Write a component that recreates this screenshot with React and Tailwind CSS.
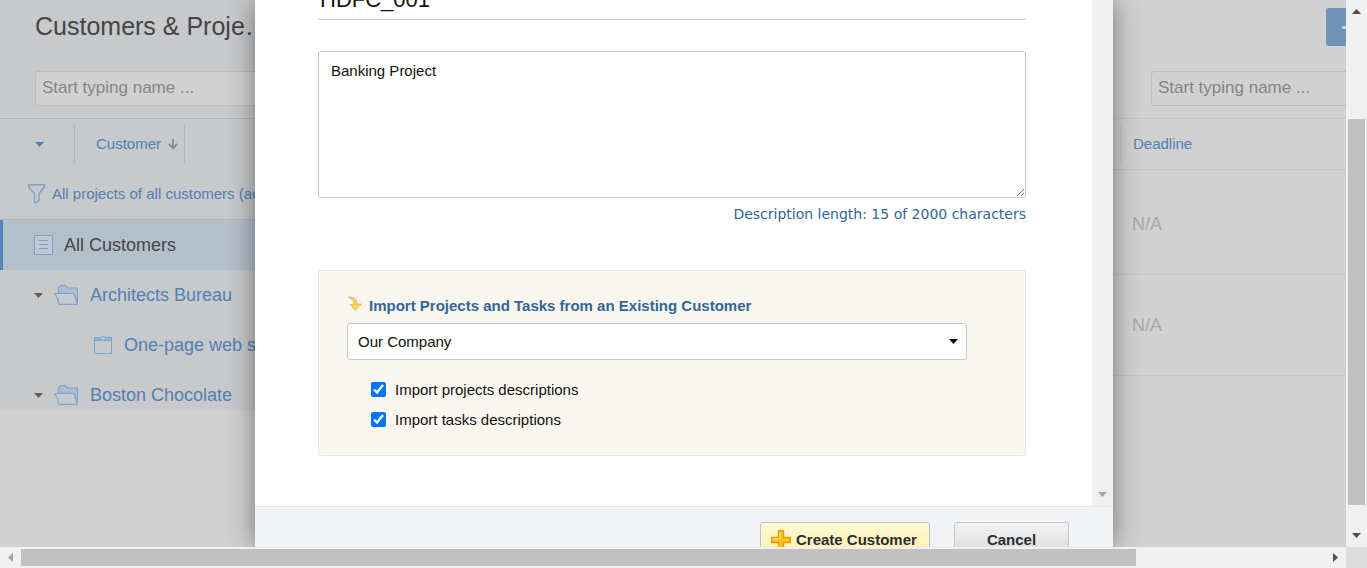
import React from "react";

function Caret({ dir = "down", className = "" }) {
  const paths = {
    down: "M0 0H9L4.5 5Z",
    up: "M0 5H9L4.5 0Z",
    left: "M5 0V9L0 4.5Z",
    right: "M0 0V9L5 4.5Z",
  };
  const vertical = dir === "down" || dir === "up";
  return (
    <svg
      width={vertical ? 9 : 5}
      height={vertical ? 5 : 9}
      className={`shrink-0 fill-current ${className}`}
      aria-hidden="true"
    >
      <path d={paths[dir]} />
    </svg>
  );
}

function FunnelIcon() {
  return (
    <svg width="18" height="20" viewBox="0 0 18 20" fill="none" stroke="#7ba0c3" strokeWidth="1.4" className="shrink-0" aria-hidden="true">
      <path d="M0.700 0.700H16.500V3L11 9.500V16.500L7.500 19L6.500 18V9.500L0.700 3Z" />
    </svg>
  );
}

function ListIcon() {
  return (
    <svg width="19" height="20" viewBox="0 0 19 20" fill="none" stroke="#809fcb" className="shrink-0" aria-hidden="true">
      <rect x="0.5" y="0.5" width="18" height="19" rx="0.5" fill="#bfc8d5" />
      <path d="M5 5.500H14M5 9.500H14M5 13.500H14" />
    </svg>
  );
}

function FolderIcon() {
  return (
    <svg width="25" height="20" viewBox="0 0 25 20" stroke="#84a1cc" strokeWidth="1.2" strokeLinejoin="round" className="shrink-0" aria-hidden="true">
      <path d="M4.500 8V3L6.500 0.700H11.500L13.500 3H23.400V19L19 8.500Z" fill="#adbdd7" />
      <path d="M0.700 8.500H18.500Q20 8.500 20.500 10L23.400 19.300H5Q4.500 14 0.700 8.500Z" fill="#c7cad0" />
    </svg>
  );
}

function ProjectIcon() {
  return (
    <svg width="18" height="19" viewBox="0 0 18 19" fill="none" stroke="#79a5c8" className="shrink-0" aria-hidden="true">
      <path d="M0.500 1.500H17.500V17.500H0.500ZM0.500 4.500H17.500" />
      <path d="M1 3H17" strokeWidth="2" stroke="#94b4cf" />
      <path d="M6.500 4V1.500L7.500 0.500H10.500L11.500 1.500V4Z" fill="#b5c6d5" />
    </svg>
  );
}

function SortIcon() {
  return (
    <svg width="10" height="11" viewBox="0 0 10 11" fill="none" stroke="#8c9095" strokeWidth="2" className="shrink-0" aria-hidden="true">
      <path d="M5 0V9M0.800 5L5 9.300L9.200 5" />
    </svg>
  );
}

function ImportIcon() {
  return (
    <svg width="16" height="16" viewBox="0 0 16 16" className="-mt-1 shrink-0" aria-hidden="true">
      <path d="M1 1.200Q9.500 0 10.500 8H14.500L8.500 14.500L3 8.500H6.700Q7 3.500 1 1.200Z" fill="#f6cc68" stroke="#eab36c" strokeWidth="0.8" strokeLinejoin="round" />
      <path d="M5 9.200H13L8.500 13.500Z" fill="#fbdc5b" />
    </svg>
  );
}

function PlusIcon() {
  return (
    <svg width="20" height="20" viewBox="0 0 20 20" className="shrink-0" aria-hidden="true">
      <path d="M7.500 0.700H12.500V7.500H19.300V12.500H12.500V19.300H7.500V12.500H0.700V7.500H7.500Z" fill="#fbc521" stroke="#e79a0c" strokeWidth="1.4" />
      <path d="M9 2V9H2" fill="none" stroke="#fde06a" />
    </svg>
  );
}

function SearchBox({ label, className }) {
  return (
    <input
      type="text"
      aria-label={label}
      placeholder="Start typing name ..."
      className={`h-[35px] rounded-l-[3px] border border-r-0 border-[#bcbcbc] bg-[#d1d1d1] px-[6px] pb-px text-[17px] placeholder:text-[#858585] ${className}`}
    />
  );
}

function Sidebar() {
  return (
    <aside className="w-[340px] shrink-0 self-start bg-[#c8c9cb]">
      <div className="h-[118px] overflow-hidden pl-[35px]">
        <h1 className="mt-[11px] text-[25px] leading-[30px] whitespace-nowrap text-[#444547]">Customers &amp; Proje…</h1>
        <SearchBox label="Search customers" className="mt-[30px] w-full" />
      </div>
      <div className="flex h-[51px] items-center border-t border-[#b4b5b7] text-[15px] text-[#5080b5]">
        <button type="button" aria-label="Choose rows" className="flex h-[38px] w-[75px] items-center border-r border-[#b4b5b7] pl-[35px]">
          <Caret />
        </button>
        <button type="button" className="flex h-[38px] w-[110px] items-center justify-end gap-[7px] border-r border-[#b4b5b7] pr-[6px]">
          Customer
          <SortIcon />
        </button>
      </div>
      <a href="#filter" className="flex h-[50px] items-center gap-[6px] pl-7 text-[15px] whitespace-nowrap text-[#5080b5]">
        <FunnelIcon />
        All projects of all customers (active)
      </a>
      <ul className="h-[192px] overflow-hidden border-t border-[#b4b5b7] text-[18px] whitespace-nowrap text-[#5080b5]">
        <li>
          <a href="#all" className="flex h-[50px] items-center gap-[11px] border-l-[3px] border-[#5384bd] bg-[#b4bfcc] pl-[31px] text-[#444547]">
            <ListIcon />
            All Customers
          </a>
        </li>
        <li>
          <a href="#architects" className="flex h-[50px] items-center pl-[34px]">
            <Caret className="text-[#606060]" />
            <span className="pr-[11px] pl-[11px]"><FolderIcon /></span>
            Architects Bureau
          </a>
        </li>
        <li>
          <a href="#site" className="flex h-[50px] items-center gap-[12px] pl-[94px]">
            <ProjectIcon />
            One-page web site
          </a>
        </li>
        <li>
          <a href="#boston" className="flex h-[50px] items-center pl-[34px]">
            <Caret className="text-[#606060]" />
            <span className="pr-[11px] pl-[11px]"><FolderIcon /></span>
            Boston Chocolate
          </a>
        </li>
      </ul>
    </aside>
  );
}

function TaskArea() {
  return (
    <section className="flex min-w-0 flex-1 flex-col">
      <div className="flex h-[118px] flex-col items-end pt-2">
        <button type="button" aria-label="Add task" className="h-[38px] w-5 overflow-hidden rounded-l-[3px] bg-[#7093b8] pl-4">
          <svg width="14" height="14" viewBox="0 0 14 14" className="mt-px max-w-none" aria-hidden="true">
            <path d="M0 6.500H14M7 0V13" stroke="#d5dbe2" strokeWidth="2.500" />
          </svg>
        </button>
        <SearchBox label="Search tasks" className="mt-[25px] w-[195px]" />
      </div>
      <table className="w-full table-fixed border-t border-[#c6c6c6] text-left">
        <thead>
          <tr className="h-[51px] border-b border-[#c6c6c6]">
            <th aria-label="Task" />
            <th className="w-[226px] p-0 text-[15px] font-normal text-[#5080b5]">
              <div className="flex h-[38px] items-center border-l border-[#c6c6c6] pl-3">Deadline</div>
            </th>
          </tr>
        </thead>
        <tbody className="text-[18px] text-[#a7a8ab]">
          <tr className="h-[4px] border-b border-[#cdcdcd]"><td colSpan={2} /></tr>
          <tr className="h-[101px] border-b border-[#c6c6c6]"><td /><td className="p-0 pl-3">N/A</td></tr>
          <tr className="h-[101px] border-b border-[#c6c6c6]"><td /><td className="p-0 pl-3">N/A</td></tr>
        </tbody>
      </table>
    </section>
  );
}

function CheckRow({ id, children }) {
  return (
    <div className="flex h-[30px] items-center gap-[9px]">
      <input id={id} type="checkbox" defaultChecked className="mb-px size-[15px] accent-[#0075ff]" />
      <label htmlFor={id}>{children}</label>
    </div>
  );
}

function CustomerDialog() {
  return (
    <div
      role="dialog"
      aria-label="Create customer"
      className="flex h-full min-w-0 flex-1 flex-col bg-white text-[15px] text-[#111111] shadow-[0_0_25px_rgba(0,0,0,0.45)]"
    >
      <div className="flex min-h-0 flex-1">
        <form className="min-w-0 flex-1 overflow-hidden pr-[66px] pl-[63px]">
          <input
            aria-label="Customer name"
            defaultValue="HDFC_001"
            className="-mt-5 block h-10 w-full border-b border-[#c8c8c8] px-[2px] text-[22px] outline-none"
          />
          <textarea
            aria-label="Description"
            defaultValue="Banking Project"
            className="mt-[31px] block h-[147px] w-full resize rounded-[3px] border border-[#c8c8c8] px-3 py-[9px] leading-5 outline-none"
          />
          <p className="mt-[6px] text-right font-['DejaVu_Sans',sans-serif] text-[14px] leading-5 text-[#336699]">
            Description length: 15 of 2000 characters
          </p>
          <div className="mt-[46px] rounded-[3px] border border-[#ebe8df] bg-[#faf7f0] pt-[25px] pr-[58px] pb-5 pl-7">
            <label htmlFor="source" className="flex items-center gap-[6px] leading-5 font-bold text-[#336699]">
              <ImportIcon />
              Import Projects and Tasks from an Existing Customer
            </label>
            <div className="mt-[7px] flex items-center">
              <select id="source" className="h-[37px] w-full appearance-none rounded-[3px] border border-[#c8c8c8] bg-white px-[10px] pt-px">
                <option>Our Company</option>
              </select>
              <Caret className="pointer-events-none -ml-[18px] text-black" />
            </div>
            <div className="mt-[15px] pl-6">
              <CheckRow id="projects">Import projects descriptions</CheckRow>
              <CheckRow id="tasks">Import tasks descriptions</CheckRow>
            </div>
          </div>
        </form>
        <div className="flex w-[21px] items-end justify-center bg-[#f0f0f0] pb-[9px] text-[#a3a3a3]">
          <Caret />
        </div>
      </div>
      <footer className="flex h-[41px] items-start justify-end gap-6 overflow-hidden border-t border-[#e6e6e6] bg-[#f3f4f7] pt-[15px] pr-11 font-bold text-[#2b2d2f]">
        <button type="button" className="flex h-9 w-[170px] shrink-0 items-center gap-[5px] rounded-[3px] border border-[#c3c1bc] bg-linear-to-b from-[#fff9d7] to-[#fff0a8] pl-[10px] whitespace-nowrap">
          <PlusIcon />
          Create Customer
        </button>
        <button type="button" className="h-9 w-[115px] shrink-0 rounded-[3px] border border-[#c5c5c5] bg-linear-to-b from-[#f3f3f3] to-[#d9dadc]">
          Cancel
        </button>
      </footer>
    </div>
  );
}

export default function App() {
  return (
    <div className="flex h-screen flex-col overflow-hidden bg-[#f0f0f0] font-['Liberation_Sans',Arial,sans-serif]">
      <div className="flex min-h-0 flex-1">
        <main className="relative flex min-w-0 flex-1 overflow-hidden bg-[#d1d1d1]">
          <Sidebar />
          <TaskArea />
          <div className="absolute inset-0 flex pr-[233px] pl-[255px]">
            <CustomerDialog />
          </div>
        </main>
        <div className="flex w-[21px] flex-col items-center pt-[9px] pb-[9px] text-[#505050]">
          <Caret dir="up" />
          <div className="flex w-full flex-1 flex-col justify-end px-[2px] pt-2 pb-7">
            <div className="h-4/5 bg-[#c1c1c1]" />
          </div>
          <Caret />
        </div>
      </div>
      <div className="flex h-[21px]">
        <div className="flex min-w-0 flex-1 items-center px-2 text-[#505050]">
          <Caret dir="left" className="text-[#a3a3a3]" />
          <div className="h-full flex-1 py-[2px] pl-2">
            <div className="h-full w-[85%] bg-[#c1c1c1]" />
          </div>
          <Caret dir="right" />
        </div>
        <div className="w-[21px] bg-[#dcdcdc]" />
      </div>
    </div>
  );
}
